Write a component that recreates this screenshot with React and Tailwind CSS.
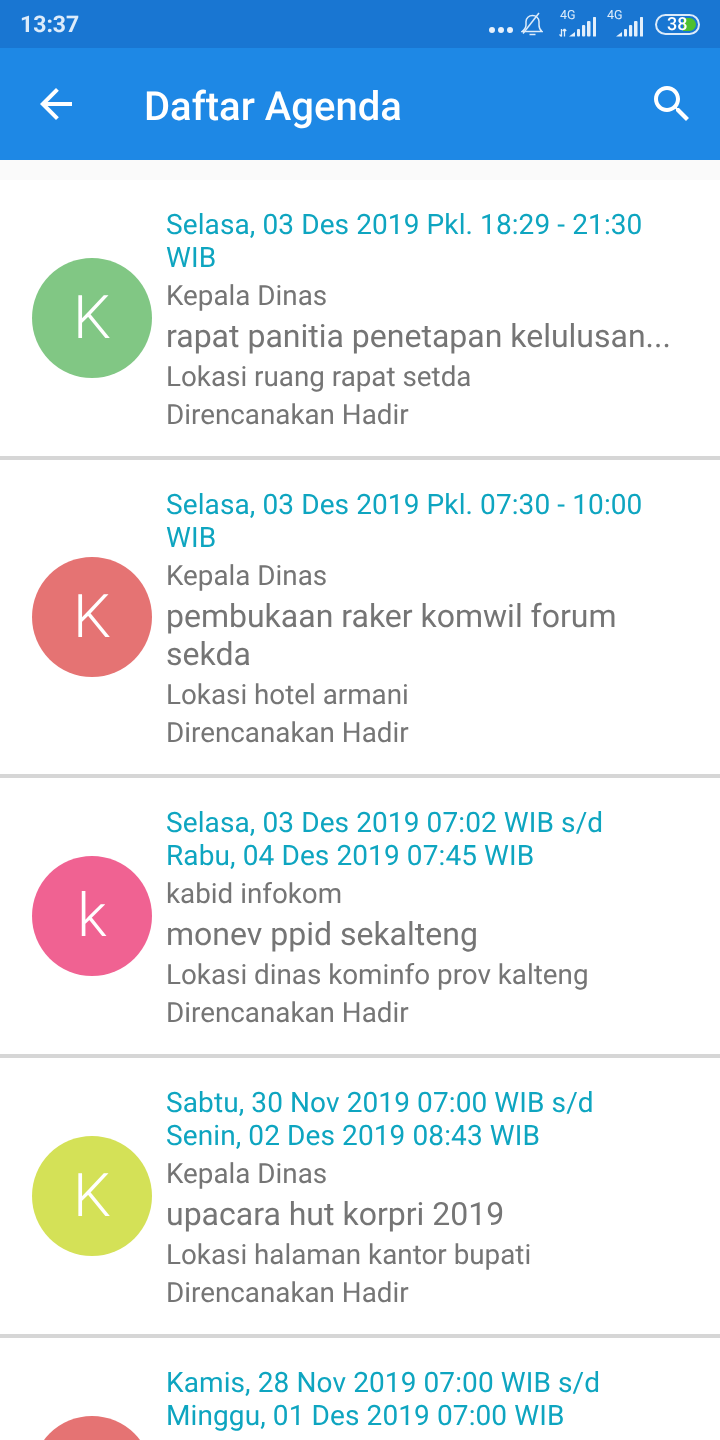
const agendas = [
  {
    letter: "K",
    avatar: "bg-[#81c784]",
    date: ["Selasa, 03 Des 2019 Pkl. 18:29 - 21:30", "WIB"],
    role: "Kepala Dinas",
    title: ["rapat panitia penetapan kelulusan..."],
    place: "Lokasi ruang rapat setda",
    status: "Direncanakan Hadir",
  },
  {
    letter: "K",
    avatar: "bg-[#e57373]",
    date: ["Selasa, 03 Des 2019 Pkl. 07:30 - 10:00", "WIB"],
    role: "Kepala Dinas",
    title: ["pembukaan raker komwil forum", "sekda"],
    place: "Lokasi hotel armani",
    status: "Direncanakan Hadir",
  },
  {
    letter: "k",
    avatar: "bg-[#f06292]",
    date: ["Selasa, 03 Des 2019 07:02 WIB s/d", "Rabu, 04 Des 2019 07:45 WIB"],
    role: "kabid infokom",
    title: ["monev ppid sekalteng"],
    place: "Lokasi dinas kominfo prov kalteng",
    status: "Direncanakan Hadir",
  },
  {
    letter: "K",
    avatar: "bg-[#d4e157]",
    date: ["Sabtu, 30 Nov 2019 07:00 WIB s/d", "Senin, 02 Des 2019 08:43 WIB"],
    role: "Kepala Dinas",
    title: ["upacara hut korpri 2019"],
    place: "Lokasi halaman kantor bupati",
    status: "Direncanakan Hadir",
  },
  // last card runs off the bottom of the screen, only its date shows
  {
    letter: "",
    avatar: "bg-[#e57373]",
    date: ["Kamis, 28 Nov 2019 07:00 WIB s/d", "Minggu, 01 Des 2019 07:00 WIB"],
    role: "",
    title: [],
    place: "",
    status: "",
  },
];

const SignalBars = ({ arrows }) => (
  <div className="relative w-[38px] h-[36px]">
    <span className="absolute left-[1px] top-[3px] text-[12.5px] leading-[14px] text-[#dcebfa]">4G</span>
    <svg width="38" height="36" viewBox="0 0 38 36" className="text-[#e3effb]">
      {arrows && (
        <path
          d="M2.500 23v7.500M0.500 28.500l2 2M5.500 30.500V23M3.800 25l1.700-2M5.500 23l1.700 2"
          stroke="currentColor"
          strokeWidth="1.300"
          fill="none"
        />
      )}
      <g fill="currentColor">
        <path d="M10 30.500l6-4.500v4.500z" />
        <rect x="18" y="23" width="3" height="7.500" rx="1" />
        <rect x="23" y="19" width="3.200" height="11.500" rx="1" />
        <rect x="28" y="15" width="3.500" height="15.500" rx="1" />
        <rect x="34" y="11" width="3" height="19.500" rx="0.500" />
      </g>
    </svg>
  </div>
);

const StatusBar = () => (
  <div className="h-12 bg-[#1976d2] flex items-center justify-between pl-[20px] pr-[20px]">
    <span className="text-[23px] font-bold text-[#dcebfa] mt-[2px]">13:37</span>
    <div className="flex items-center text-[#dcebfa]">
      <div className="flex gap-[3px] mt-[12px] mr-[8px]">
        <span className="w-[6px] h-[6px] rounded-full bg-[#e6f0fb]" />
        <span className="w-[6px] h-[6px] rounded-full bg-[#e6f0fb]" />
        <span className="w-[6px] h-[6px] rounded-full bg-[#e6f0fb]" />
      </div>
      <svg width="22" height="24" viewBox="0 0 22 24" fill="none" stroke="currentColor" strokeWidth="1.500" className="mr-[16px]">
        <path d="M1 19.500h20c-2-1.500-3-3-3-6.500V9.500C18 6 15 3.500 11.500 3.500S5 6 5 9.500V13c0 3.500-2 5-4 6.500z" />
        <path d="M8.500 22.500h6" />
        <path d="M2 21.500L18 1" />
      </svg>
      <div className="mr-[9px]">
        <SignalBars arrows />
      </div>
      <div className="mr-[11px]">
        <SignalBars />
      </div>
      <div className="relative w-[45px] h-[21px] rounded-full border-2 border-[#dcebfa] overflow-hidden">
        <span className="absolute right-[2px] top-[2px] w-[13px] h-[13px] rounded-r-full bg-[#4fc02e]" />
        <span className="absolute left-[10px] top-0 text-[18px] leading-[17px] font-medium text-white">38</span>
      </div>
    </div>
  </div>
);

const AgendaCard = ({ item }) => (
  <div className="bg-white flex items-center pl-8 pr-6 pt-[28px] pb-[22px] border-b-4 border-[#d6d6d6] box-content">
    <div className={`w-[120px] h-[120px] shrink-0 rounded-full flex items-center justify-center ${item.avatar} -mt-[6px]`}>
      <span className="text-[60px] font-light text-white">{item.letter}</span>
    </div>
    <div className="ml-[14px] flex flex-col text-[#757575] text-[27.8px]">
      <div className="text-[28px] text-[#0ea5c0] leading-[33px] tracking-[0.1px]">
        {item.date.map((line) => (
          <div key={line}>{line}</div>
        ))}
      </div>
      <div className="leading-[38px] mt-[3px] min-h-[38px]">{item.role}</div>
      <div className="text-[32px] leading-[38px] mt-[2px] min-h-[38px]">
        {item.title.map((line) => (
          <div key={line}>{line}</div>
        ))}
      </div>
      <div className="leading-[38px] mt-[3px] min-h-[38px]">{item.place}</div>
      <div className="leading-[38px] min-h-[38px]">{item.status}</div>
    </div>
  </div>
);

export default function App() {
  return (
    <div className="w-[720px] h-[1440px] overflow-hidden bg-[#fafafa] font-['Roboto',sans-serif] [text-rendering:geometricPrecision] [will-change:transform]">
      <StatusBar />
      <header className="h-[112px] bg-[#1e88e5] flex items-center pl-8 pr-6 text-white">
        <svg width="48" height="48" viewBox="0 0 24 24" fill="currentColor">
          <path d="M20 11H7.830l5.590-5.590L12 4l-8 8 8 8 1.410-1.410L7.830 13H20v-2z" />
        </svg>
        <h1 className="ml-[64px] mt-[6px] text-[40px] leading-[48px] font-medium flex-1">Daftar Agenda</h1>
        <svg width="48" height="48" viewBox="0 0 24 24" fill="currentColor">
          <path d="M15.500 14h-.790l-.280-.270C15.410 12.590 16 11.110 16 9.500 16 5.910 13.090 3 9.500 3S3 5.910 3 9.500 5.910 16 9.500 16c1.610 0 3.090-.590 4.230-1.570l.270.280v.790l5 4.990L20.490 19l-4.990-5zm-6 0C7.010 14 5 11.990 5 9.500S7.010 5 9.500 5 14 7.010 14 9.500 11.990 14 9.500 14z" />
        </svg>
      </header>
      <main className="mt-5">
        {agendas.map((item) => (
          <AgendaCard key={item.date[0]} item={item} />
        ))}
      </main>
    </div>
  );
}
